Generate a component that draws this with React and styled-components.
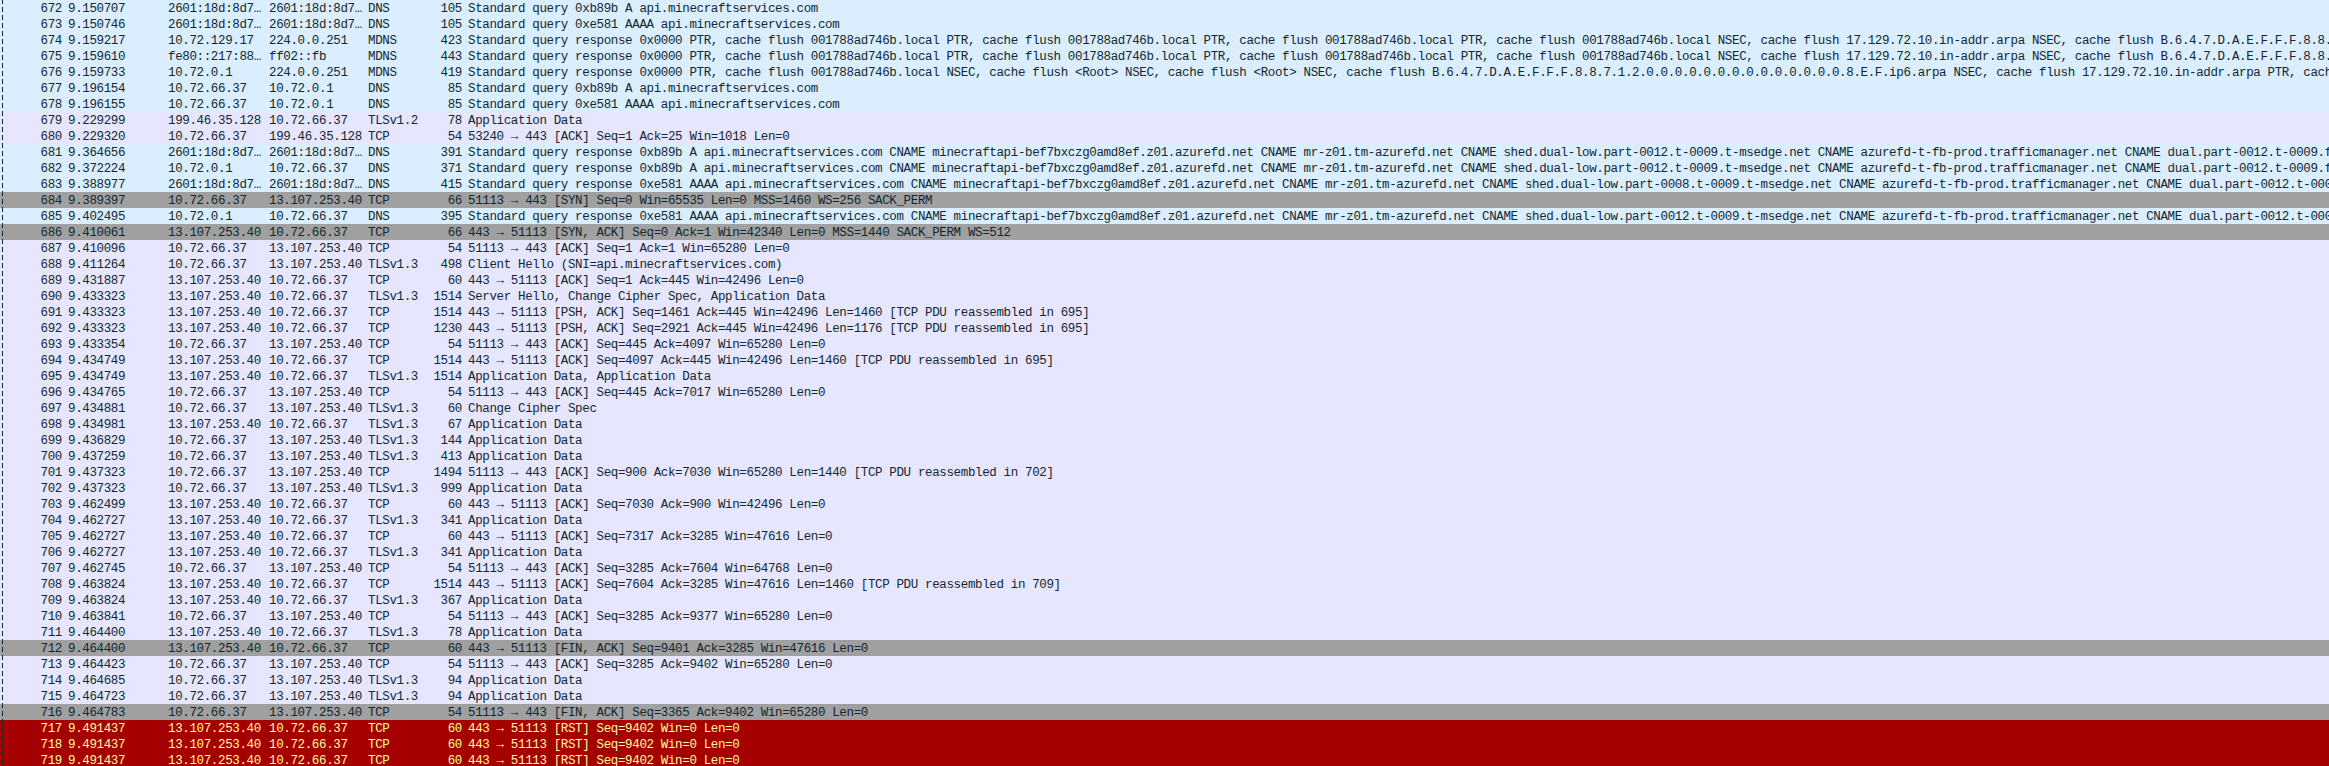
import React from "react";
import styled, { createGlobalStyle } from "styled-components";

const Global = createGlobalStyle`
  html, body { margin: 0; padding: 0; background: #e7e6ff; overflow: hidden; }
`;

const palette = {
  udp: { bg: "#daeeff", fg: "#12272e" },
  tcp: { bg: "#e7e6ff", fg: "#12272e" },
  flag: { bg: "#a0a0a0", fg: "#12272e" },
  rst: { bg: "#a40000", fg: "#fffc9c" },
};

const List = styled.div`
  position: relative;
  width: 2329px;
  height: 766px;
  overflow: hidden;
  font-family: "Liberation Mono", "DejaVu Sans Mono", monospace;
  font-size: 12.5px;
  letter-spacing: -0.36px;
`;

const RelatedLine = styled.div`
  position: absolute;
  left: 2px;
  top: -1px;
  bottom: 0;
  width: 1px;
  background: repeating-linear-gradient(to bottom, #12272e 0 5px, transparent 5px 8px);
`;

const Row = styled.div`
  display: grid;
  grid-template-columns: 68px 100px 101px 99px 56px 44px 1fr;
  grid-auto-rows: 16px;
  height: 16px;
  line-height: 18px;
  background: ${(p) => palette[p.$kind].bg};
  color: ${(p) => palette[p.$kind].fg};
`;

const Cell = styled.div`
  white-space: pre;
  overflow: hidden;
  padding-right: ${(p) => (p.$end ? "6px" : "0")};
  text-align: ${(p) => (p.$end ? "right" : "left")};
`;

const DEV = "2601:18d:8d7…";
const ME = "10.72.66.37";
const MS = "13.107.253.40";
const NS = "10.72.0.1";
const AD = "Application Data";
const MC = "api.minecraftservices.com";
const MIN = "minecraftapi-bef7bxczg0amd8ef.z01.azurefd.net CNAME mr-z01.tm-azurefd.net CNAME shed.dual-low.part-";
const TM = ".t-0009.t-msedge.net CNAME azurefd-t-fb-prod.trafficmanager.net CNAME dual.part-0012.t-0009.fb-t-msedge.net";
const PTR = "PTR, cache flush 001788ad746b.local ";
const NSEC = "NSEC, cache flush 17.129.72.10.in-addr.arpa NSEC, cache flush B.6.4.7.D.A.E.F.F.F.8.8.7.1.2.0.0.0.0";
const IN = "443 → 51113";
const OUT = "51113 → 443";

const packets = [
  ["udp", 672, "9.150707", DEV, DEV, "DNS", 105, `Standard query 0xb89b A ${MC}`],
  ["udp", 673, "9.150746", DEV, DEV, "DNS", 105, `Standard query 0xe581 AAAA ${MC}`],
  ["udp", 674, "9.159217", "10.72.129.17", "224.0.0.251", "MDNS", 423, `Standard query response 0x0000 ${PTR}${PTR}${PTR}${PTR}${NSEC}`],
  ["udp", 675, "9.159610", "fe80::217:88…", "ff02::fb", "MDNS", 443, `Standard query response 0x0000 ${PTR}${PTR}${PTR}${PTR}${NSEC}`],
  ["udp", 676, "9.159733", "10.72.0.1", "224.0.0.251", "MDNS", 419, "Standard query response 0x0000 PTR, cache flush 001788ad746b.local NSEC, cache flush <Root> NSEC, cache flush <Root> NSEC, cache flush B.6.4.7.D.A.E.F.F.F.8.8.7.1.2.0.0.0.0.0.0.0.0.0.0.0.0.0.0.8.E.F.ip6.arpa NSEC, cache flush 17.129.72.10.in-addr.arpa PTR, cache flush"],
  ["udp", 677, "9.196154", ME, NS, "DNS", 85, `Standard query 0xb89b A ${MC}`],
  ["udp", 678, "9.196155", ME, NS, "DNS", 85, `Standard query 0xe581 AAAA ${MC}`],
  ["tcp", 679, "9.229299", "199.46.35.128", ME, "TLSv1.2", 78, AD],
  ["tcp", 680, "9.229320", ME, "199.46.35.128", "TCP", 54, "53240 → 443 [ACK] Seq=1 Ack=25 Win=1018 Len=0"],
  ["udp", 681, "9.364656", DEV, DEV, "DNS", 391, `Standard query response 0xb89b A ${MC} CNAME ${MIN}0012${TM}`],
  ["udp", 682, "9.372224", NS, ME, "DNS", 371, `Standard query response 0xb89b A ${MC} CNAME ${MIN}0012${TM}`],
  ["udp", 683, "9.388977", DEV, DEV, "DNS", 415, `Standard query response 0xe581 AAAA ${MC} CNAME ${MIN}0008${TM}`],
  ["flag", 684, "9.389397", ME, MS, "TCP", 66, `${OUT} [SYN] Seq=0 Win=65535 Len=0 MSS=1460 WS=256 SACK_PERM`],
  ["udp", 685, "9.402495", NS, ME, "DNS", 395, `Standard query response 0xe581 AAAA ${MC} CNAME ${MIN}0012${TM}`],
  ["flag", 686, "9.410061", MS, ME, "TCP", 66, `${IN} [SYN, ACK] Seq=0 Ack=1 Win=42340 Len=0 MSS=1440 SACK_PERM WS=512`],
  ["tcp", 687, "9.410096", ME, MS, "TCP", 54, `${OUT} [ACK] Seq=1 Ack=1 Win=65280 Len=0`],
  ["tcp", 688, "9.411264", ME, MS, "TLSv1.3", 498, `Client Hello (SNI=${MC})`],
  ["tcp", 689, "9.431887", MS, ME, "TCP", 60, `${IN} [ACK] Seq=1 Ack=445 Win=42496 Len=0`],
  ["tcp", 690, "9.433323", MS, ME, "TLSv1.3", 1514, "Server Hello, Change Cipher Spec, Application Data"],
  ["tcp", 691, "9.433323", MS, ME, "TCP", 1514, `${IN} [PSH, ACK] Seq=1461 Ack=445 Win=42496 Len=1460 [TCP PDU reassembled in 695]`],
  ["tcp", 692, "9.433323", MS, ME, "TCP", 1230, `${IN} [PSH, ACK] Seq=2921 Ack=445 Win=42496 Len=1176 [TCP PDU reassembled in 695]`],
  ["tcp", 693, "9.433354", ME, MS, "TCP", 54, `${OUT} [ACK] Seq=445 Ack=4097 Win=65280 Len=0`],
  ["tcp", 694, "9.434749", MS, ME, "TCP", 1514, `${IN} [ACK] Seq=4097 Ack=445 Win=42496 Len=1460 [TCP PDU reassembled in 695]`],
  ["tcp", 695, "9.434749", MS, ME, "TLSv1.3", 1514, "Application Data, Application Data"],
  ["tcp", 696, "9.434765", ME, MS, "TCP", 54, `${OUT} [ACK] Seq=445 Ack=7017 Win=65280 Len=0`],
  ["tcp", 697, "9.434881", ME, MS, "TLSv1.3", 60, "Change Cipher Spec"],
  ["tcp", 698, "9.434981", MS, ME, "TLSv1.3", 67, AD],
  ["tcp", 699, "9.436829", ME, MS, "TLSv1.3", 144, AD],
  ["tcp", 700, "9.437259", ME, MS, "TLSv1.3", 413, AD],
  ["tcp", 701, "9.437323", ME, MS, "TCP", 1494, `${OUT} [ACK] Seq=900 Ack=7030 Win=65280 Len=1440 [TCP PDU reassembled in 702]`],
  ["tcp", 702, "9.437323", ME, MS, "TLSv1.3", 999, AD],
  ["tcp", 703, "9.462499", MS, ME, "TCP", 60, `${IN} [ACK] Seq=7030 Ack=900 Win=42496 Len=0`],
  ["tcp", 704, "9.462727", MS, ME, "TLSv1.3", 341, AD],
  ["tcp", 705, "9.462727", MS, ME, "TCP", 60, `${IN} [ACK] Seq=7317 Ack=3285 Win=47616 Len=0`],
  ["tcp", 706, "9.462727", MS, ME, "TLSv1.3", 341, AD],
  ["tcp", 707, "9.462745", ME, MS, "TCP", 54, `${OUT} [ACK] Seq=3285 Ack=7604 Win=64768 Len=0`],
  ["tcp", 708, "9.463824", MS, ME, "TCP", 1514, `${IN} [ACK] Seq=7604 Ack=3285 Win=47616 Len=1460 [TCP PDU reassembled in 709]`],
  ["tcp", 709, "9.463824", MS, ME, "TLSv1.3", 367, AD],
  ["tcp", 710, "9.463841", ME, MS, "TCP", 54, `${OUT} [ACK] Seq=3285 Ack=9377 Win=65280 Len=0`],
  ["tcp", 711, "9.464400", MS, ME, "TLSv1.3", 78, AD],
  ["flag", 712, "9.464400", MS, ME, "TCP", 60, `${IN} [FIN, ACK] Seq=9401 Ack=3285 Win=47616 Len=0`],
  ["tcp", 713, "9.464423", ME, MS, "TCP", 54, `${OUT} [ACK] Seq=3285 Ack=9402 Win=65280 Len=0`],
  ["tcp", 714, "9.464685", ME, MS, "TLSv1.3", 94, AD],
  ["tcp", 715, "9.464723", ME, MS, "TLSv1.3", 94, AD],
  ["flag", 716, "9.464783", ME, MS, "TCP", 54, `${OUT} [FIN, ACK] Seq=3365 Ack=9402 Win=65280 Len=0`],
  ["rst", 717, "9.491437", MS, ME, "TCP", 60, `${IN} [RST] Seq=9402 Win=0 Len=0`],
  ["rst", 718, "9.491437", MS, ME, "TCP", 60, `${IN} [RST] Seq=9402 Win=0 Len=0`],
  ["rst", 719, "9.491437", MS, ME, "TCP", 60, `${IN} [RST] Seq=9402 Win=0 Len=0`],
];

export default function App() {
  return (
    <List>
      <Global />
      {packets.map(([kind, no, time, src, dst, proto, len, info]) => (
        <Row key={no} $kind={kind}>
          <Cell $end>{no}</Cell>
          <Cell>{time}</Cell>
          <Cell>{src}</Cell>
          <Cell>{dst}</Cell>
          <Cell>{proto}</Cell>
          <Cell $end>{len}</Cell>
          <Cell>{info}</Cell>
        </Row>
      ))}
      <RelatedLine />
    </List>
  );
}
